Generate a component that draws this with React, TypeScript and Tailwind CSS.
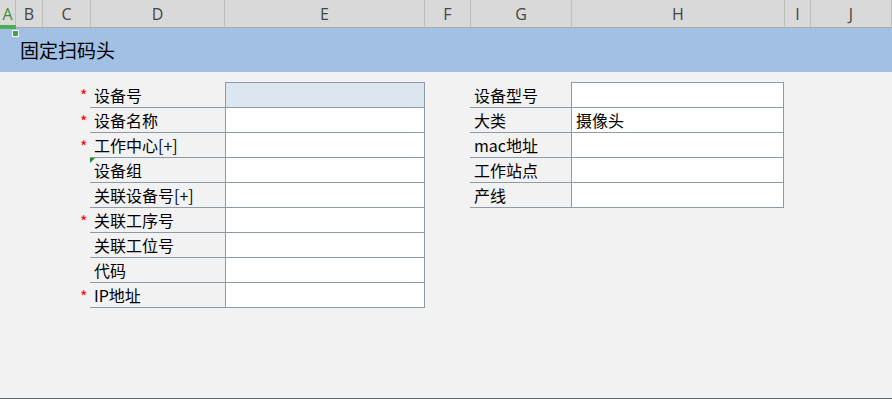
import React from 'react';

const columns = [
  { name: 'A', w: 'w-[16px]', active: true },
  { name: 'B', w: 'w-[27px]' },
  { name: 'C', w: 'w-[48px]' },
  { name: 'D', w: 'w-[134px]' },
  { name: 'E', w: 'w-[200px]' },
  { name: 'F', w: 'w-[46px]' },
  { name: 'G', w: 'w-[101px]' },
  { name: 'H', w: 'w-[213px]' },
  { name: 'I', w: 'w-[26px]' },
  { name: 'J', w: 'flex-1' },
];

const leftRows = [
  { label: '设备号', required: true, highlight: true },
  { label: '设备名称', required: true },
  { label: '工作中心[+]', required: true },
  { label: '设备组', note: true },
  { label: '关联设备号[+]' },
  { label: '关联工序号', required: true },
  { label: '关联工位号' },
  { label: '代码' },
  { label: 'IP地址', required: true },
];

const rightRows = [
  { label: '设备型号', value: '' },
  { label: '大类', value: '摄像头' },
  { label: 'mac地址', value: '' },
  { label: '工作站点', value: '' },
  { label: '产线', value: '' },
];

const font = { fontFamily: '"Noto Sans CJK SC", "Noto Sans", sans-serif' };

export default function App() {
  return (
    <div
      className="relative w-[892px] h-[399px] bg-[#f2f2f2] overflow-hidden flex flex-col border-b border-[#5f646b]"
      style={font}
    >
      {/* column headers */}
      <div className="flex h-[28px] bg-[#d9d9d9] border-b border-[#ababab] shrink-0">
        {columns.map((c) => (
          <div
            key={c.name}
            className={`${c.w} h-full flex items-center justify-center border-r border-[#bcbcbc] text-[16px] ${
              c.active ? 'text-[#3f8f3a]' : 'text-[#444]'
            }`}
            style={{ fontFamily: '"Open Sans", "Noto Sans", sans-serif' }}
          >
            {c.name}
          </div>
        ))}
      </div>

      {/* selected column marker + fill handle */}
      <div className="absolute left-0 top-[25px] w-[16px] h-[4px] bg-[#4caf50]" />
      <div className="absolute left-[12px] top-[30px] w-[7px] h-[7px] bg-[#3fa34d] border border-white" />

      {/* title band */}
      <div className="h-[44px] bg-[#a2c0e4] flex items-center pl-[20px] text-[19px] text-black shrink-0">
        固定扫码头
      </div>

      <div className="flex pt-[10px]">
        {/* left table */}
        <div className="ml-[80px] flex flex-col">
          {leftRows.map((r, i) => (
            <div key={r.label} className={`flex ${i === 0 ? 'h-[26px]' : 'h-[25px]'}`}>
              <div className="w-[10px] text-[#ff0000] text-[16px] leading-none pt-[5px]">
                {r.required ? '*' : ''}
              </div>
              <div className="relative w-[135px] border-b border-[#8e9aa7] flex items-center pl-[4px] text-[16px] text-black">
                {r.note && (
                  <span className="absolute left-0 top-0 w-0 h-0 border-t-[5px] border-t-[#1e8a1e] border-r-[5px] border-r-transparent" />
                )}
                {r.label}
              </div>
              <div
                className={`w-[200px] border-b border-x border-[#8e9aa7] ${i === 0 ? 'border-t bg-[#dce6f1]' : 'bg-white'}`}
              />
            </div>
          ))}
        </div>

        {/* right table */}
        <div className="ml-[45px] flex flex-col">
          {rightRows.map((r, i) => (
            <div key={r.label} className={`flex ${i === 0 ? 'h-[26px]' : 'h-[25px]'}`}>
              <div className="w-[101px] border-b border-[#8e9aa7] flex items-center pl-[4px] text-[16px] text-black">
                {r.label}
              </div>
              <div
                className={`w-[213px] bg-white border-b border-x border-[#8e9aa7] flex items-center pl-[4px] text-[16px] text-black ${
                  i === 0 ? 'border-t' : ''
                }`}
              >
                {r.value}
              </div>
            </div>
          ))}
        </div>
      </div>
    </div>
  );
}
